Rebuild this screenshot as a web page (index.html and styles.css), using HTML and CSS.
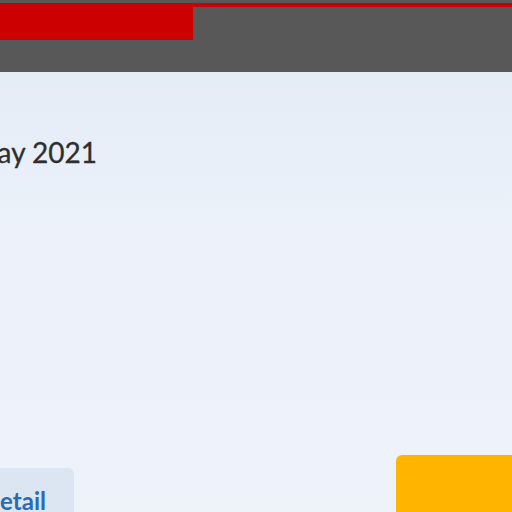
FILE: index.html
```html
<!DOCTYPE html>
<html>
<head>
<meta charset="utf-8">
<link rel="stylesheet" href="styles.css">
</head>
<body>
<header class="topbar">
  <div class="brand-line"></div>
  <div class="brand-block"></div>
</header>
<main class="content">
  <div class="date">May 2021</div>
  <div class="actions">
    <button class="btn-detail">Detail</button>
    <button class="btn-primary"></button>
  </div>
</main>
</body>
</html>
```
FILE: styles.css
```css
html, body {
  margin: 0;
  padding: 0;
  width: 512px;
  height: 512px;
  overflow: hidden;
  font-family: Lato, "Open Sans", sans-serif;
}
.topbar {
  position: relative;
  height: 72px;
  background: #585858;
}
.brand-line {
  position: absolute;
  top: 3px;
  left: 0;
  right: 0;
  height: 4px;
  background: #c8000a;
}
.brand-block {
  position: absolute;
  top: 3px;
  left: 0;
  width: 193px;
  height: 37px;
  background: #cc0000;
}
.content {
  height: 440px;
  background: linear-gradient(#e4ecf6, #edf2fa 40%, #eef3fa);
  display: flex;
  flex-direction: column;
}
.date {
  margin-top: 63px;
  margin-left: -28px;
  font-size: 28px;
  color: #2e2e2e;
  line-height: 34px;
  -webkit-text-stroke: 0.3px #2e2e2e;
}
.actions {
  margin-top: auto;
  display: flex;
  align-items: flex-end;
  justify-content: space-between;
}
.btn-detail {
  margin-left: -30px;
  width: 104px;
  height: 44px;
  border: none;
  border-radius: 6px 6px 0 0;
  background: #dce6f2;
  color: #2a6bb5;
  font-family: Lato, sans-serif;
  font-weight: bold;
  font-size: 24px;
  text-align: left;
  padding: 18px 0 0 12px;
}
.btn-primary {
  width: 116px;
  height: 57px;
  border: none;
  border-radius: 6px 0 0 0;
  background: #ffb400;
}
```
